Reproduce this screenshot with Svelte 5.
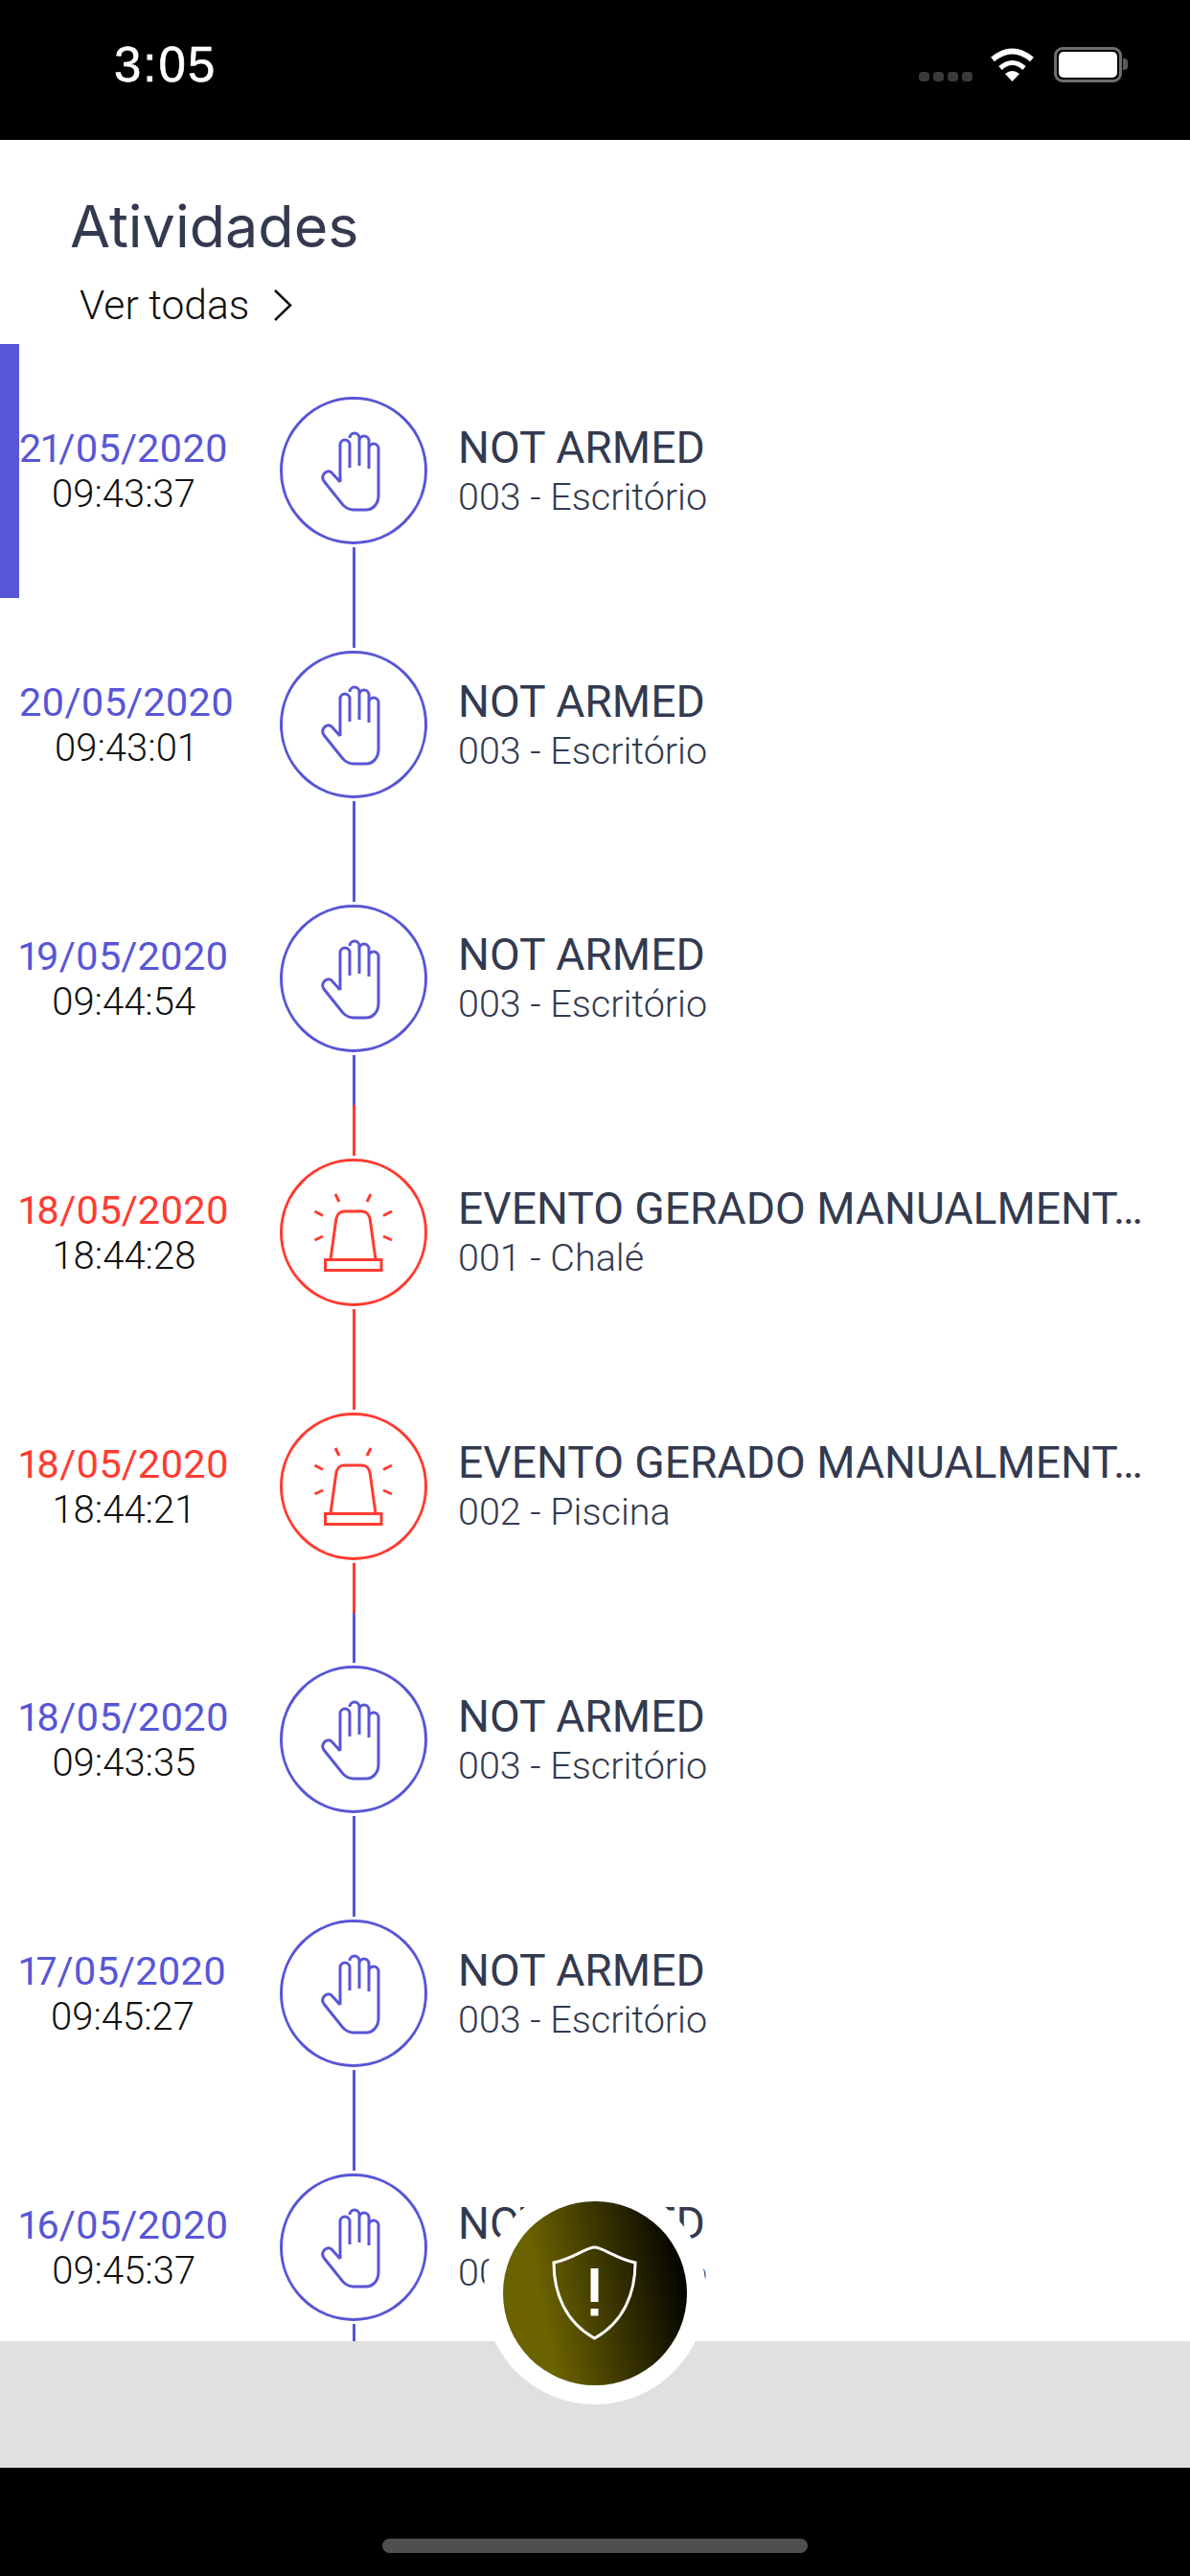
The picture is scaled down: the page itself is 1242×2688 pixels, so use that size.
<script>
  const events = [
    { date: '21/05/2020', time: '09:43:37', title: 'NOT ARMED', zone: '003 - Escritório', type: 'hand' },
    { date: '20/05/2020', time: '09:43:01', title: 'NOT ARMED', zone: '003 - Escritório', type: 'hand' },
    { date: '19/05/2020', time: '09:44:54', title: 'NOT ARMED', zone: '003 - Escritório', type: 'hand' },
    { date: '18/05/2020', time: '18:44:28', title: 'EVENTO GERADO MANUALMENT…', zone: '001 - Chalé', type: 'alarm' },
    { date: '18/05/2020', time: '18:44:21', title: 'EVENTO GERADO MANUALMENT…', zone: '002 - Piscina', type: 'alarm' },
    { date: '18/05/2020', time: '09:43:35', title: 'NOT ARMED', zone: '003 - Escritório', type: 'hand' },
    { date: '17/05/2020', time: '09:45:27', title: 'NOT ARMED', zone: '003 - Escritório', type: 'hand' },
    { date: '16/05/2020', time: '09:45:37', title: 'NOT ARMED', zone: '003 - Escritório', type: 'hand' }
  ];
</script>

<div class="page">
  <!-- status bar -->
  <div class="status">
    <span class="clock">3:05</span>
    <div class="status-icons">
      <div class="signal"><i></i><i></i><i></i><i></i></div>
      <svg class="wifi" width="47" height="35" viewBox="0 0 47 35">
        <path d="M3 12Q23.5-5 44 12" fill="none" stroke="#fff" stroke-width="6" />
        <path d="M11 21Q23.5 10 36 21" fill="none" stroke="#fff" stroke-width="5" />
        <path d="M16 27Q23.5 21 31 27L23.5 35Z" fill="#fff" />
      </svg>
      <div class="battery"><span></span></div>
      <div class="battery-cap"></div>
    </div>
  </div>

  <div class="content">
    <div class="heading">
      <h1>Atividades</h1>
      <div class="see-all">
        <span>Ver todas</span>
        <svg width="20" height="35" viewBox="0 0 20 35">
          <path d="M2 2L18 17.5L2 33" fill="none" stroke="#111" stroke-width="2.5" />
        </svg>
      </div>
    </div>

    <div class="list">
      {#each events as ev, i}
        <div class={`row ${ev.type}`} class:active={i === 0}>
          <div class="when">
            <div class="stamp">
              <div class="date">{ev.date}</div>
              <div class="time">{ev.time}</div>
            </div>
          </div>
          <div class="node">
            <div class="stub top" class:hidden={i === 0}></div>
            <svg width="154" height="154" viewBox="0 0 154 154" fill="none" stroke="currentColor" stroke-width="3">
              <circle cx="77" cy="77" r="75.5" />
              {#if ev.type === 'hand'}
                <path d="M63 89V50a5 5 0 0 1 10 0V74M73 43a5 5 0 0 1 10 0V72M83 46a5 5 0 0 1 10 0V75M93 54a5 5 0 0 1 10 0V103C103 112 97 118 90 118H77C73 118 69 116 66 113L46 88C42 82 49 75 54 79L63 89" />
              {:else}
                <rect x="47.5" y="105.5" width="58.5" height="11" />
                <path d="M53 105L58.7 64C59.5 58 63 55 67 55H86C90 55 93.5 58 94.3 64L100 105" />
                <path d="M58 37L62 45M95 37L91 45M36.5 55L45 59.5M117 55L108 59.5M36.5 85L45 81M117 85L108 81" />
              {/if}
            </svg>
            <div class="stub bottom"></div>
          </div>
          <div class="info">
            <div class="title">{ev.title}</div>
            <div class="zone">{ev.zone}</div>
          </div>
        </div>
      {/each}
    </div>
  </div>

  <div class="tabbar"></div>

  <div class="home"><span></span></div>

  <!-- botão flutuante -->
  <div class="fab">
    <div class="fab-inner">
      <svg width="90" height="100" viewBox="0 0 90 100">
        <path d="M44.5 2C36 2 22 14 2 18C2 50 14 80 44.5 97C75 80 87 50 87 18C67 14 53 2 44.5 2Z" fill="none" stroke="#fff" stroke-width="3" />
        <rect x="40.5" y="24" width="8" height="35" fill="#fff" />
        <rect x="40.5" y="66" width="8" height="7.5" fill="#fff" />
      </svg>
    </div>
  </div>
</div>

<style>
  :global(body) {
    margin: 0;
    background: #fff;
  }

  .page {
    position: relative;
    width: 1242px;
    height: 2688px;
    display: flex;
    flex-direction: column;
    overflow: hidden;
    font-family: Roboto, sans-serif;
  }

  .status {
    height: 146px;
    flex-shrink: 0;
    box-sizing: border-box;
    background: #000;
    color: #fff;
    display: flex;
    justify-content: space-between;
    padding: 49px 65px 0 119px;
  }

  .clock {
    font-family: "Liberation Sans", sans-serif;
    font-size: 51px;
    font-weight: 400;
    line-height: 38px;
    letter-spacing: 2px;
    -webkit-text-stroke: 0.6px #fff;
  }

  .status-icons {
    display: flex;
    align-items: flex-start;
  }

  .signal {
    display: flex;
    gap: 4px;
    margin-top: 26px;
    margin-right: 18px;
  }

  .signal i {
    width: 11px;
    height: 10px;
    border-radius: 4px;
    background: #3a3a3a;
  }

  .wifi {
    margin-top: 1px;
    margin-right: 20px;
  }

  .battery {
    width: 71px;
    height: 37px;
    box-sizing: border-box;
    border: 3px solid #6e6e6e;
    border-radius: 9px;
    padding: 2px;
    background: #000;
  }

  .battery span {
    display: block;
    height: 100%;
    background: #fff;
    border-radius: 5px;
  }

  .battery-cap {
    width: 5px;
    height: 12px;
    margin-top: 12px;
    margin-left: 1px;
    background: #5a5a5a;
    border-radius: 0 4px 4px 0;
  }

  .content {
    flex: 1;
    min-height: 0;
    overflow: hidden;
  }

  .heading {
    height: 213px;
    box-sizing: border-box;
    padding: 54px 0 0 73px;
  }

  h1 {
    margin: 0;
    font-family: Inter, sans-serif;
    font-size: 61px;
    font-weight: 400;
    line-height: 72px;
    color: #333a50;
  }

  .see-all {
    display: flex;
    align-items: center;
    gap: 25px;
    margin: 21px 0 0 10px;
    font-size: 42.6px;
    font-weight: 300;
    line-height: 50px;
    color: #111;
  }

  .row {
    height: 264.8px;
    display: flex;
    align-items: center;
  }

  .row.active {
    box-shadow: inset 20px 0 0 #5856d6;
  }

  .hand {
    color: #5856d6;
  }

  .alarm {
    color: #ff3b30;
  }

  .when {
    width: 258px;
    box-sizing: border-box;
    flex-shrink: 0;
    padding: 2px 0 0 20px;
  }

  /* hora centralizada embaixo da data */
  .stamp {
    display: inline-flex;
    flex-direction: column;
    align-items: center;
  }

  .date {
    font-size: 41.5px;
    line-height: 48px;
    font-variant-numeric: proportional-nums;
  }

  .time {
    font-size: 40px;
    font-weight: 300;
    line-height: 48px;
    color: #111;
  }

  .node {
    width: 154px;
    height: 100%;
    flex-shrink: 0;
    margin-left: 34px;
    display: flex;
    flex-direction: column;
    align-items: center;
  }

  .node svg {
    display: block;
    flex-shrink: 0;
  }

  .stub {
    flex: 1;
    width: 3px;
    background: currentColor;
  }

  .stub.top {
    margin-bottom: 3px;
  }

  .stub.bottom {
    margin-top: 3px;
  }

  .stub.hidden {
    visibility: hidden;
  }

  .info {
    flex: 1;
    min-width: 0;
    margin-left: 32px;
    padding-top: 3px;
    color: #333a50;
  }

  .title {
    font-size: 46.2px;
    line-height: 51px;
    white-space: nowrap;
  }

  .zone {
    font-size: 39.5px;
    font-weight: 300;
    line-height: 51px;
  }

  .tabbar {
    height: 132px;
    flex-shrink: 0;
    background: #e0e0e0;
  }

  .home {
    height: 113px;
    flex-shrink: 0;
    box-sizing: border-box;
    background: #000;
    display: flex;
    justify-content: center;
    padding-top: 74px;
  }

  .home span {
    width: 444px;
    height: 15px;
    border-radius: 8px;
    background: #4f4f4f;
  }

  .fab {
    position: absolute;
    left: 505px;
    top: 2277px;
    width: 232px;
    height: 232px;
    border-radius: 50%;
    background: #fff;
    display: flex;
    align-items: center;
    justify-content: center;
  }

  .fab-inner {
    width: 192px;
    height: 192px;
    border-radius: 50%;
    background: linear-gradient(79deg, #6b6200 25%, #000 95%);
    display: flex;
    align-items: center;
    justify-content: center;
  }
</style>
